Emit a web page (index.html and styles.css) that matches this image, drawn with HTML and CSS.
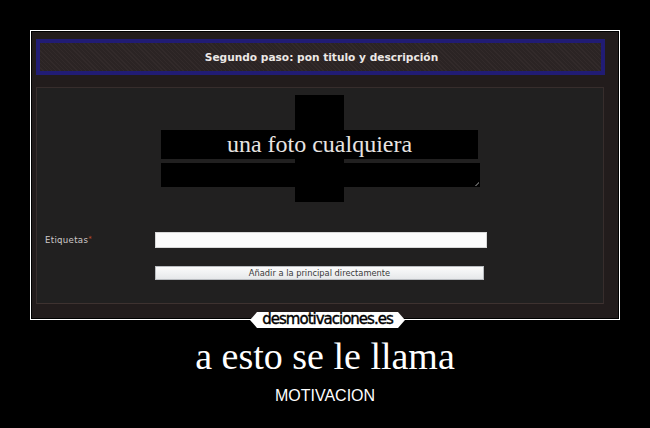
FILE: index.html
```html
<!DOCTYPE html>
<html lang="es">
<head>
  <meta charset="UTF-8" />
  <meta name="viewport" content="width=device-width, initial-scale=1.0"/>
  <title>a esto se le llama - desmotivaciones.es</title>
  <link rel="stylesheet" href="styles.css">
</head>
<body>
  <div class="poster">
    <div class="frame">
      <div class="shot">
        <div class="step-title">Segundo paso: pon titulo y descripción</div>

        <div class="panel">
          <div class="fields">
            <div class="redact"></div>
            <div class="field-title">una foto cualquiera</div>
            <div class="field-desc"><span class="grip"></span></div>
          </div>

          <div class="tags-row">
            <label class="tags-label">Etiquetas<span class="req">*</span></label>
            <div class="tags-input"></div>
          </div>

          <div class="submit">Añadir a la principal directamente</div>
        </div>
      </div>

      <div class="brand">desmotivaciones.es</div>
    </div>

    <h1 class="caption">a esto se le llama</h1>
    <p class="subcaption">MOTIVACION</p>
  </div>
</body>
</html>
```

FILE: styles.css
```css
body {
  margin: 0;
  padding: 0;
  background-color: #000;
  width: 650px;
  height: 428px;
  overflow: hidden;
}

.poster {
  display: flex;
  flex-direction: column;
  align-items: center;
  padding-top: 30px;
}

.frame {
  position: relative;
  width: 588px;
  height: 288px;
  border: 1px solid #fff;
}

.shot {
  margin: 1px;
  width: 586px;
  height: 286px;
  background-color: #221c1c;
  padding: 7px 0 0 4px;
  box-sizing: border-box;
}

/* header band of the upload form */
.step-title {
  width: 569px;
  height: 36px;
  box-sizing: border-box;
  border: 4px solid #211c74;
  background: repeating-linear-gradient(45deg, #2b2424 0, #2b2424 2px, #322a2a 2px, #322a2a 3px);
  display: flex;
  align-items: center;
  justify-content: center;
  color: #ece8e6;
  font-family: "DejaVu Sans", sans-serif;
  font-weight: bold;
  font-size: 10.6px;
  padding-left: 2px;
}

.panel {
  margin-top: 12px;
  width: 568px;
  height: 217px;
  box-sizing: border-box;
  background-color: #212020;
  border: 1px solid #372d2c;
  border-bottom-color: #3e3230;
}

.fields {
  position: relative;
  margin: 42px 0 0 124px;
  width: 319px;
}

.redact {
  position: absolute;
  left: 134px;
  top: -35px;
  width: 49px;
  height: 107px;
  background-color: #000;
}

.field-title {
  position: relative;
  width: 317px;
  height: 29px;
  background-color: #000;
  color: #e8e4e2;
  font-family: "Liberation Serif", "Times New Roman", serif;
  font-size: 24px;
  line-height: 29px;
  text-align: center;
}

.field-desc {
  position: relative;
  margin-top: 4px;
  width: 319px;
  height: 24px;
  background-color: #000;
}

.grip {
  position: absolute;
  right: 1px;
  bottom: 1px;
  width: 4px;
  height: 4px;
  background: linear-gradient(135deg, transparent 50%, #555 50%, #555 65%, transparent 65%);
}

.tags-row {
  display: flex;
  align-items: center;
  margin-top: 45px;
  padding-left: 8px;
}

.tags-label {
  width: 110px;
  color: #cfcaca;
  font-family: "DejaVu Sans", sans-serif;
  font-size: 8.6px;
  letter-spacing: 0.3px;
}

.req {
  color: #c0502a;
  font-size: 7px;
  vertical-align: top;
}

.tags-input {
  width: 332px;
  height: 16px;
  box-sizing: border-box;
  background-color: #fbfbfb;
  border: 1px solid #d8d8d8;
}

.submit {
  margin: 18px 0 0 118px;
  width: 329px;
  height: 14px;
  box-sizing: border-box;
  border: 1px solid #b9bcc0;
  background: linear-gradient(#fbfbfb, #e6e8ea);
  color: #3a3a3a;
  font-family: "DejaVu Sans", sans-serif;
  font-size: 8.3px;
  line-height: 12px;
  text-align: center;
}

/* site badge sitting on the frame's bottom edge */
.brand {
  position: absolute;
  left: 50%;
  bottom: -9px;
  margin-left: -75px;
  width: 155px;
  height: 16px;
  background-color: #fff;
  clip-path: polygon(7px 0, calc(100% - 7px) 0, 100% 50%, calc(100% - 7px) 100%, 7px 100%, 0 50%);
  color: #000;
  font-family: "DejaVu Sans", sans-serif;
  font-size: 15px;
  letter-spacing: -1px;
  line-height: 14px;
  text-align: center;
  -webkit-text-stroke: 0.4px #000;
}

.caption {
  margin: 14px 0 0;
  color: #fff;
  font-family: "Liberation Serif", "Times New Roman", serif;
  font-weight: normal;
  font-size: 38px;
  line-height: 44px;
}

.subcaption {
  margin: 9px 0 0;
  color: #fff;
  font-family: "Liberation Sans", Arial, sans-serif;
  font-size: 16px;
  line-height: 18px;
}
```
